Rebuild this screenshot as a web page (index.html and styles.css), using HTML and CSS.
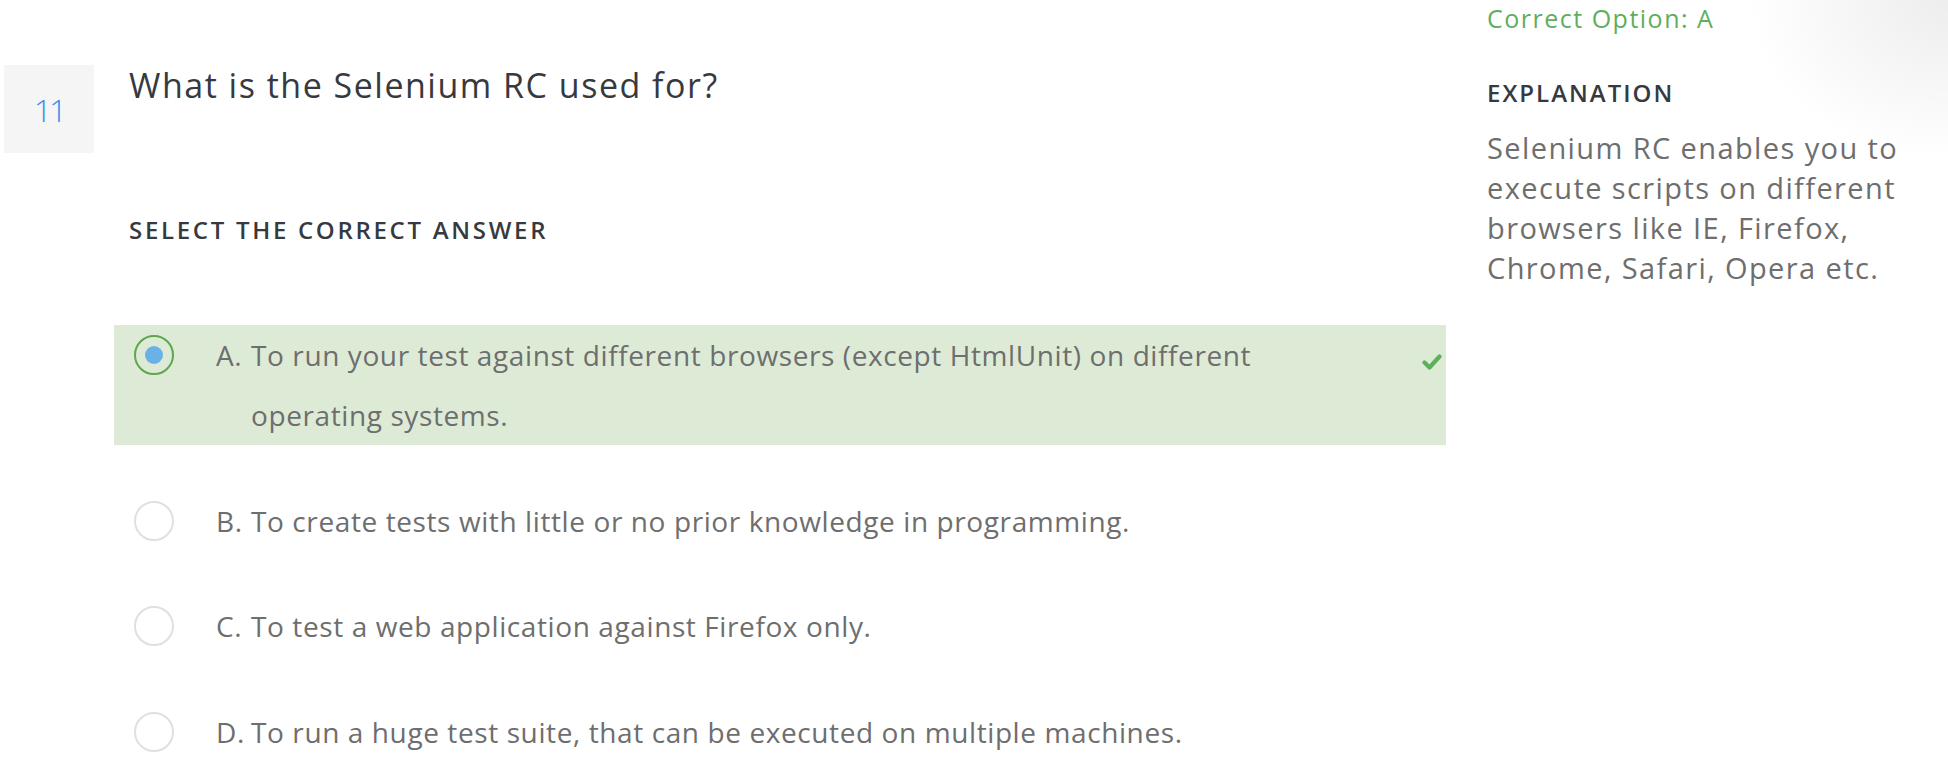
FILE: index.html
```html
<!DOCTYPE html>
<html lang="en">
<head>
<meta charset="utf-8">
<title>Question 11</title>
<link rel="stylesheet" href="styles.css">
</head>
<body>
<div class="page">
  <main class="question">
    <div class="q-head">
      <div class="q-num">11</div>
      <h1 class="q-title">What is the Selenium RC used for?</h1>
    </div>
    <h2 class="q-label">SELECT THE CORRECT ANSWER</h2>
    <ul class="options">
      <li class="option correct">
        <span class="radio checked"><span class="dot"></span></span>
        <span class="letter">A.</span>
        <span class="text">To run your test against different browsers (except HtmlUnit) on different operating systems.</span>
        <svg class="check" viewBox="0 0 20 20" width="20" height="20" aria-hidden="true"><path d="M2.5 10.5 L7.5 15.5 L17.5 4.5" fill="none" stroke="#5cb15a" stroke-width="4.2" stroke-linecap="round" stroke-linejoin="round"/></svg>
      </li>
      <li class="option">
        <span class="radio"></span>
        <span class="letter">B.</span>
        <span class="text">To create tests with little or no prior knowledge in programming.</span>
      </li>
      <li class="option">
        <span class="radio"></span>
        <span class="letter">C.</span>
        <span class="text">To test a web application against Firefox only.</span>
      </li>
      <li class="option">
        <span class="radio"></span>
        <span class="letter">D.</span>
        <span class="text">To run a huge test suite, that can be executed on multiple machines.</span>
      </li>
    </ul>
  </main>
  <aside class="side">
    <div class="correct-opt">Correct Option: A</div>
    <h3 class="exp-label">EXPLANATION</h3>
    <p class="exp-text">Selenium RC enables you to execute scripts on different browsers like IE, Firefox, Chrome, Safari, Opera etc.</p>
  </aside>
</div>
</body>
</html>
```
FILE: styles.css
```css
* { box-sizing: border-box; }
html, body { margin: 0; padding: 0; }
body {
  width: 1948px;
  height: 764px;
  overflow: hidden;
  font-family: "Open Sans", "Noto Sans", sans-serif;
  background: #fff radial-gradient(ellipse 200px 160px at 100% 0, rgba(0,0,0,0.07), rgba(0,0,0,0) 100%);
  color: #6e6e6e;
}
.page {
  display: flex;
  align-items: flex-start;
}
.question {
  width: 1487px;
  padding-left: 4px;
  padding-top: 65px;
}
.q-head {
  display: flex;
  align-items: flex-start;
  gap: 35px;
}
.q-num {
  width: 90px;
  height: 88px;
  background: #f5f5f5;
  color: #3a8cea;
  font-weight: 300;
  font-size: 32px;
  display: flex;
  align-items: center;
  justify-content: center;
  letter-spacing: -3px;
}
.q-title {
  margin: 0;
  padding-top: 0;
  font-size: 34px;
  line-height: 40px;
  font-weight: 400;
  letter-spacing: 1.5px;
  color: #363a3f;
}
.q-label {
  margin: 62px 0 0 125px;
  font-size: 24px;
  line-height: 30px;
  font-weight: 600;
  color: #363a3f;
  letter-spacing: 2.7px;
}
.options {
  list-style: none;
  margin: 80px 0 0 110px;
  padding: 0;
  width: 1332px;
  display: flex;
  flex-direction: column;
  gap: 45.5px;
}
.option {
  display: flex;
  align-items: flex-start;
  padding-left: 20px;
  padding-right: 4px;
  font-size: 28px;
  line-height: 60px;
  letter-spacing: 0.6px;
  color: #6e6e6e;
}
.option.correct {
  background: #ddebd6;
}
.radio {
  flex: none;
  width: 40px;
  height: 40px;
  margin-top: 10px;
  border: 2px solid #e0e0e0;
  border-radius: 50%;
  display: flex;
  align-items: center;
  justify-content: center;
  background: #fff;
}
.radio.checked {
  border-color: #5ea64f;
  background: transparent;
}
.dot {
  width: 18px;
  height: 18px;
  border-radius: 50%;
  background: #6cb1e5;
}
.letter {
  flex: none;
  width: 35px;
  margin-left: 42px;
}
.text {
  flex: 1;
  max-width: 1080px;
}
.check {
  flex: none;
  margin-top: 27px;
  margin-left: auto;
}
.side {
  flex: 1;
  padding-top: 3px;
}
.correct-opt {
  font-size: 25px;
  line-height: 30px;
  color: #60ae5d;
  letter-spacing: 1.5px;
}
.exp-label {
  margin: 45px 0 0 0;
  font-size: 24px;
  line-height: 30px;
  font-weight: 600;
  color: #363a3f;
  letter-spacing: 2px;
}
.exp-text {
  margin: 20px 0 0 0;
  width: 450px;
  font-size: 29px;
  line-height: 40px;
  letter-spacing: 1.4px;
  color: #6e6e6e;
}
```
